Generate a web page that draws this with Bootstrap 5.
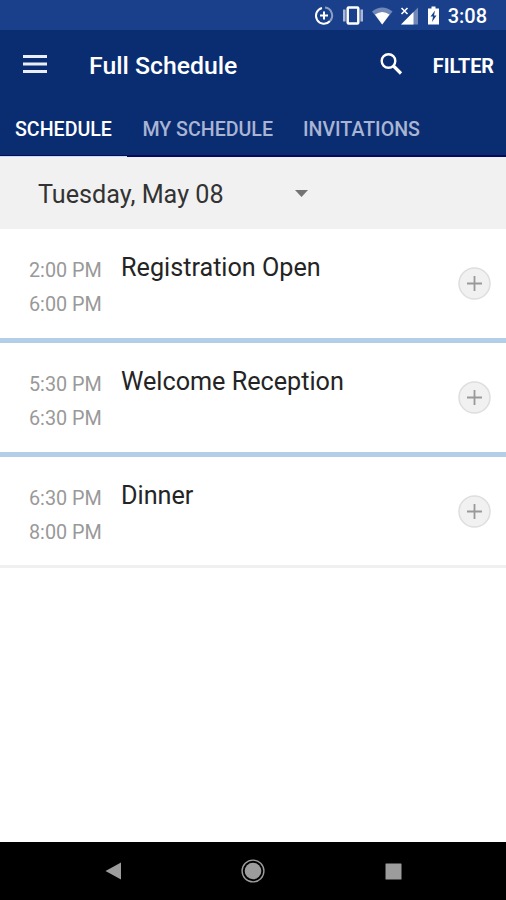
<!DOCTYPE html>
<html lang="en">
<head>
<meta charset="utf-8">
<meta name="viewport" content="width=device-width, initial-scale=1">
<title>Full Schedule</title>
<link href="https://cdn.jsdelivr.net/npm/bootstrap@5.3.0/dist/css/bootstrap.min.css" rel="stylesheet">
<style>
body{font-family:Roboto,"Liberation Sans",sans-serif;width:506px;height:900px;overflow:hidden;background:#fff}
svg{display:block;flex:none}
.status-bar{height:30px;background:#1a408c;padding-right:19px}
.clock{font-size:20px;font-weight:500;line-height:32px;margin-left:7px;padding-top:1px}
.app-head{background:#0a2d72}
.tool-row{height:71px;padding:0 12px 0 23px}
.tool-row svg{margin-bottom:3px}
.screen-title{font-size:24.800px;font-weight:500;line-height:30px;margin-left:42px}
.btn-filter{font-size:19.800px;font-weight:700;line-height:24px;margin-left:30px;padding-top:2px}
.tab-row{height:56px;padding-top:1px;border-bottom:2px solid #050a5c}
.tab-row .nav-link{height:56px;padding:0 15px;font-size:19.600px;font-weight:500;line-height:56px;color:#a9b5d3;white-space:nowrap}
.tab-row .nav-link.active{color:#fff;padding-right:15.500px;border-bottom:2px solid #c6dcf8}
.date-bar{height:72px;background:#f1f1f1;padding:3px 0 0 38px;font-size:25.200px;color:#333}
.date-bar svg{margin:-2px 0 0 71px}
.event{height:114px;padding:22px 15px 0 29px;border-bottom:5px solid #b3cfe8}
.event:last-child{height:111px;border-bottom:3px solid #f0f0f0}
.times{width:92px;font-size:19.800px;line-height:34px;padding-top:3px;color:#999}
.event-name{font-size:25.200px;line-height:34px;color:#242424}
.btn-plus{margin-top:16px}
.sys-nav{height:58px;background:#000;padding:0 104px 0 105px}
.home-key{margin-right:1px}
</style>
</head>
<body class="d-flex flex-column">
<div class="status-bar d-flex align-items-center justify-content-end text-white">
  <svg width="134" height="30" viewBox="0 0 134 30">
    <g fill="none" stroke="#fff" stroke-width="2">
      <path d="M23 21A8 8 0 1 1 15 8"/>
      <path d="M18 7.600A8 8 0 0 1 23 21" stroke="#8da0c6"/>
      <path d="M13 15.500h8M17 11.500v8"/>
      <rect x="40.700" y="7.500" width="10.600" height="16" rx="1" stroke-width="2.500"/>
      <path d="M37.300 9.500v12M54.700 9.500v12" stroke="#a9b8d7" stroke-width="2.600"/>
    </g>
    <path d="M65 11.500Q75.200 3.500 85.500 11.500L75.200 24.500Z" fill="#7188b8"/>
    <path d="M68 14.500Q75.200 9.500 82.500 14.500L75.200 24.500Z" fill="#fff"/>
    <path d="M94 24.500L111 7.500V24.500Z" fill="#7188b8"/>
    <path d="M94 24.500L106.500 12V24.500Z" fill="#fff"/>
    <path d="M94.500 8l6 6M100.500 8l-6 6" stroke="#fff" stroke-width="1.600"/>
    <path d="M121 8.500h3.500v-2h4v2h3.500v16h-11Z" fill="#fff"/>
    <path d="M128 10.500l-4.500 6h2.500l-1 5.500 4.500-6.500h-2.500Z" fill="#1a408c"/>
  </svg>
  <span class="clock">3:08</span>
</div>
<header class="app-head text-white">
  <div class="tool-row d-flex align-items-center">
    <svg width="24" height="18" viewBox="0 0 24 18" fill="#e9eefa"><path d="M0 0h24v3H0zM0 7.500h24v3H0zM0 15h24v3H0z"/></svg>
    <span class="screen-title">Full Schedule</span>
    <svg class="ms-auto" width="23" height="23" viewBox="0 0 23 23" fill="none" stroke="#fff"><circle cx="8.500" cy="8" r="6.800" stroke-width="2.400"/><path d="M13.500 13L21 20.500" stroke-width="3.200"/></svg>
    <span class="btn-filter">FILTER</span>
  </div>
  <nav class="tab-row nav flex-nowrap">
    <a class="nav-link active" href="#">SCHEDULE</a>
    <a class="nav-link" href="#">MY SCHEDULE</a>
    <a class="nav-link" href="#">INVITATIONS</a>
  </nav>
</header>
<main class="flex-grow-1">
  <div class="date-bar d-flex align-items-center">
    <span class="date-text">Tuesday, May 08</span>
    <svg width="13" height="7" viewBox="0 0 13 7"><path d="M0 0h13L6.500 7z" fill="#737373"/></svg>
  </div>
  <section>
    <article class="event d-flex align-items-start">
      <div class="times"><div>2:00 PM</div><div>6:00 PM</div></div>
      <div class="event-name">Registration Open</div>
      <svg class="btn-plus ms-auto" width="33" height="33" viewBox="0 0 33 33"><circle cx="16.500" cy="16.500" r="15.500" fill="#f1f1f1" stroke="#dedede" stroke-width="1.500"/><path d="M9 16.500h15M16.500 9v15" stroke="#999" stroke-width="1.800"/></svg>
    </article>
    <article class="event d-flex align-items-start">
      <div class="times"><div>5:30 PM</div><div>6:30 PM</div></div>
      <div class="event-name">Welcome Reception</div>
      <svg class="btn-plus ms-auto" width="33" height="33" viewBox="0 0 33 33"><circle cx="16.500" cy="16.500" r="15.500" fill="#f1f1f1" stroke="#dedede" stroke-width="1.500"/><path d="M9 16.500h15M16.500 9v15" stroke="#999" stroke-width="1.800"/></svg>
    </article>
    <article class="event d-flex align-items-start">
      <div class="times"><div>6:30 PM</div><div>8:00 PM</div></div>
      <div class="event-name">Dinner</div>
      <svg class="btn-plus ms-auto" width="33" height="33" viewBox="0 0 33 33"><circle cx="16.500" cy="16.500" r="15.500" fill="#f1f1f1" stroke="#dedede" stroke-width="1.500"/><path d="M9 16.500h15M16.500 9v15" stroke="#999" stroke-width="1.800"/></svg>
    </article>
  </section>
</main>
<footer class="sys-nav d-flex align-items-center justify-content-between">
  <svg width="17" height="18" viewBox="0 0 17 18"><path d="M16 .5v17L.5 9z" fill="#9c9c9c"/></svg>
  <svg class="home-key" width="24" height="24" viewBox="0 0 24 24"><circle cx="12" cy="12" r="8.300" fill="#9c9c9c"/><circle cx="12" cy="12" r="10.900" fill="none" stroke="#9c9c9c" stroke-width="1.400"/></svg>
  <svg width="17" height="17" viewBox="0 0 17 17"><rect x=".5" y=".5" width="16" height="16" rx=".5" fill="#9c9c9c"/></svg>
</footer>
<script src="https://cdn.jsdelivr.net/npm/bootstrap@5.3.0/dist/js/bootstrap.bundle.min.js"></script>
</body>
</html>
